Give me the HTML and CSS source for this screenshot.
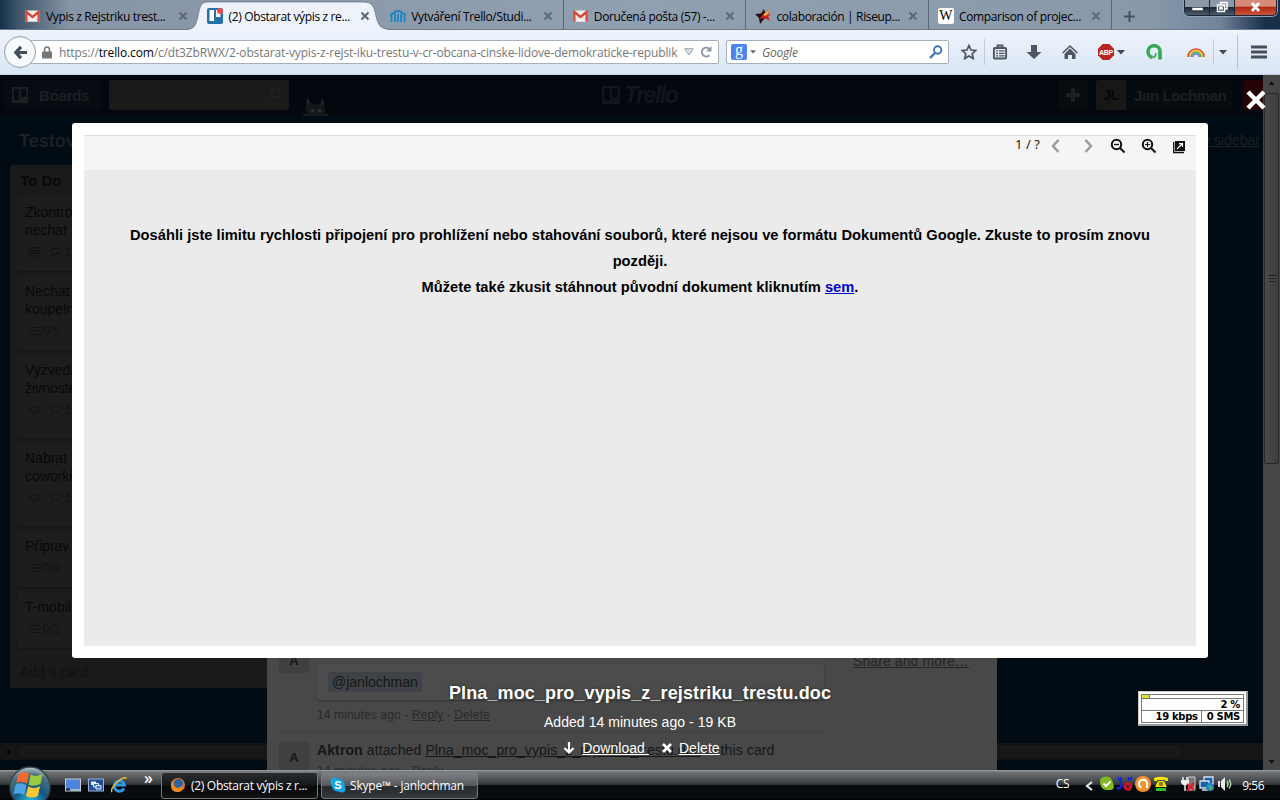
FILE: index.html
```html
<!DOCTYPE html>
<html lang="cs">
<head>
  <meta charset="UTF-8" />
  <title>(2) Obstarat výpis z rejstříku trestů | Trello</title>
  <link rel="stylesheet" href="styles.css">
</head>
<body>
  <svg width="0" height="0" class="defs">
    <symbol id="gmail" viewBox="0 0 16 12">
      <rect width="16" height="12" rx="1" fill="#f3efec"/>
      <path d="M2 11 6.500 6M14 11 9.500 6" stroke="#cfc8c4" fill="none"/>
      <path d="M1.400 12V1.500L8 7l6.600-5.500V12" fill="none" stroke="#d8463a" stroke-width="2.500"/>
    </symbol>
    <symbol id="x" viewBox="0 0 10 10"><path d="M1.500 1.500l7 7M8.500 1.500l-7 7" stroke="currentColor" stroke-width="2" fill="none"/></symbol>
    <symbol id="caret" viewBox="0 0 8 5"><path d="M0 0h8L4 4.500z" fill="currentColor"/></symbol>
    <symbol id="board" viewBox="0 0 16 16"><path fill-rule="evenodd" d="M0 0h16v16H0zM2 2v11h5V2zM9 2v8h5V2z" fill="currentColor"/></symbol>
    <symbol id="bubble" viewBox="0 0 12 10"><path d="M2.500 1.500h7l1.500 2-1.500 3H6L3 9V6.500L1 4.500z" fill="none" stroke="currentColor"/></symbol>
    <symbol id="eye" viewBox="0 0 12 8"><path d="M.5 4 4 1h4l3.500 3L8 7H4z" fill="none" stroke="currentColor"/></symbol>
    <symbol id="lines" viewBox="0 0 12 10"><path d="M0 .8h12M0 3.600h12M0 6.400h12M0 9.200h8" stroke="currentColor" stroke-width="1.200"/></symbol>
    <symbol id="checks" viewBox="0 0 13 10"><path d="M0 1.500h2m1 0h10M0 5h2m1 0h10M0 8.500h2m1 0h10" stroke="currentColor" stroke-width="1.200"/></symbol>
  </svg>

  <div class="tabbar">
    <div class="tabs">
      <div class="tab first"><svg class="fav" viewBox="0 0 16 16"><use href="#gmail" x="0" y="2" width="15" height="12"/></svg><span>Vypis z Rejstriku trest...</span><svg class="close"><use href="#x"/></svg></div>
      <div class="tab active">
        <svg class="shape" viewBox="0 0 208 30"><path d="M0 30C9 29 10 25 12 16 14 6 15 2 22 2H177c9 0 11 4 13 14 2 9 4 13 15 14z" fill="#eef3fb"/><path d="M0 29.500C9 29 10 25 12 16 14 6 15 2 22 2H177c9 0 11 4 13 14 2 9 4 13 15 13.500" fill="none" stroke="#5c6b7b" stroke-opacity=".65"/></svg>
        <svg class="fav" viewBox="0 0 16 16"><rect width="16" height="16" rx="2" fill="#2373a6"/><path d="M2.500 2h4.500v11H2.500zM9 2h4.500v7H9z" fill="#fff"/><circle cx="13" cy="3" r="3" fill="#f0504c"/></svg><span>(2) Obstarat výpis z re...</span><svg class="close"><use href="#x"/></svg>
      </div>
      <div class="tab"><svg class="fav" viewBox="0 0 16 16"><path d="M1.500 14V8M5 14V6M8 14V6M11 14V6M14.500 14V8" stroke="#1687c4" stroke-width="1.800"/><path d="M.5 8Q1 5 4 5.500 5 3 8 3t4 2.500q3-.5 3.500 2.500" fill="none" stroke="#1687c4" stroke-width="2"/></svg><span>Vytváření Trello/Studi...</span><svg class="close"><use href="#x"/></svg></div>
      <div class="tab"><svg class="fav" viewBox="0 0 16 16"><use href="#gmail" x="0" y="2" width="15" height="12"/></svg><span>Doručená pošta (57) -...</span><svg class="close"><use href="#x"/></svg></div>
      <div class="tab"><svg class="fav" viewBox="0 0 16 16"><path d="M0 6l6-.5L9 1l1.500 5 3 4-4 .5L5 16l-1-6z" fill="#241010"/><path d="M8 6l7-5-2 5 3 1-3 1 2 5-5-3-5 1z" fill="#d42020"/><path d="M9 6l6-5-3 6-3 1z" fill="#f5c04a"/></svg><span>colaboración | Riseup...</span><svg class="close"><use href="#x"/></svg></div>
      <div class="tab"><div class="fav wiki">W</div><span>Comparison of projec...</span><svg class="close"><use href="#x"/></svg></div>
      <svg class="newtab" viewBox="0 0 11 11"><path d="M5.500 0v11M0 5.500h11" stroke="#46525e" stroke-width="2"/></svg>
    </div>
    <div class="winbtns">
      <div><svg viewBox="0 0 24 14"><rect x="7" y="7.500" width="11" height="3" fill="#fff" stroke="#444" stroke-width=".6"/></svg></div>
      <div><svg viewBox="0 0 24 14"><path d="M10.500 4.500V2.500h6.500v6.500H15M7.500 5h7v6.500h-7zM10 7.500h2v1.500h-2z" fill="none" stroke="#fff" stroke-width="1.500"/></svg></div>
      <div class="wclose"><svg viewBox="0 0 40 14"><path d="M16.500 3l7 8M23.500 3l-7 8" stroke="#fff" stroke-width="2.800"/></svg></div>
    </div>
  </div>

  <div class="navbar">
    <div class="back"><svg viewBox="0 0 16 16"><path d="M8.500 2 3 8l5.500 6M3 8h12" fill="none" stroke="#424f5a" stroke-width="3.400"/></svg></div>
    <div class="urlbar">
      <svg class="lock" viewBox="0 0 10 13"><path d="M2.500 6V4Q2.500 1 5 1t2.500 3v2" fill="none" stroke="#777" stroke-width="1.600"/><rect y="5.500" width="10" height="7" rx="1" fill="#777"/></svg>
      <span class="url">https://<b>trello.com</b>/c/dt3ZbRWX/2-obstarat-vypis-z-rejst-iku-trestu-v-cr-obcana-cinske-lidove-demokraticke-republik</span>
      <svg class="drop" viewBox="0 0 10 8"><path d="M.7.700h8.600L5 7z" fill="#dde2e8" stroke="#9aa4ae"/></svg>
      <svg class="reload" viewBox="0 0 12 12"><path d="M9.300 9.200A4.400 4.400 0 1 1 9 2.700" fill="none" stroke="#8d97a1" stroke-width="2"/><path d="M11.500 0v5.500H6z" fill="#8d97a1"/></svg>
    </div>
    <div class="search">
      <div class="g">g</div><svg class="caret"><use href="#caret"/></svg><em>Google</em>
      <svg class="glass" viewBox="0 0 14 14"><circle cx="8.700" cy="5" r="3.700" fill="none" stroke="#4274b5" stroke-width="1.900"/><path d="M6 8 1 13" stroke="#4274b5" stroke-width="2.400"/></svg>
    </div>
    <div class="tool star"><svg viewBox="0 0 16 16"><path d="M8 1.500l2 4.500 4.800.500-3.600 3.200 1 4.800L8 12l-4.200 2.500 1-4.800L1.200 6.500 6 6z" fill="none" stroke="#4c5661" stroke-width="1.700"/></svg></div>
    <div class="tool list"><svg viewBox="0 0 16 16"><path d="M5.500 3.500V1.500h5v2" fill="none" stroke="#4c5661" stroke-width="1.800"/><rect x="1.900" y="4" width="12.200" height="10.500" rx="1" fill="none" stroke="#4c5661" stroke-width="1.900"/><path d="M4 6.800h2m1 0h5.500M4 9.300h2m1 0h5.500M4 11.800h2m1 0h5.500" stroke="#4c5661" stroke-width="1.200"/></svg></div>
    <div class="tool"><svg viewBox="0 0 16 16"><path d="M5 1h6v7h4.500L8 15 .5 8H5z" fill="#4c5661"/></svg></div>
    <div class="tool"><svg viewBox="0 0 16 16"><path d="M8 4.500 13.500 10v5H10v-4H6v4H2.500v-5z" fill="#4c5661"/><path d="M.7 9 8 2l7.300 7" fill="none" stroke="#4c5661" stroke-width="1.600"/></svg></div>
    <div class="tool abp"><svg viewBox="0 0 16 16"><path d="M4.700 0h6.600L16 4.700v6.600L11.300 16H4.700L0 11.300V4.700z" fill="#b8261f"/><text x="8" y="11" class="abptext">ABP</text></svg><svg class="caret"><use href="#caret"/></svg></div>
    <div class="tool"><svg viewBox="0 0 16 16"><path d="M6.500 13.500A6 6 0 1 1 14 8.500V15.500" fill="none" stroke="#36a853" stroke-width="3.600"/><path d="M6.500 13.500Q10 13 10 9" fill="none" stroke="#36a853" stroke-width="1.500"/></svg></div>
    <div class="tool rainbow"><svg class="arc" viewBox="0 0 18 10" fill="none" stroke-width="1.700"><path d="M1 10a8 8 0 0 1 16 0" stroke="#e8442e"/><path d="M2.600 10a6.400 6.400 0 0 1 12.800 0" stroke="#f6c83a"/><path d="M4.200 10a4.800 4.800 0 0 1 9.600 0" stroke="#58b55a"/><path d="M5.800 10a3.200 3.200 0 0 1 6.400 0" stroke="#7a86e0"/></svg></div>
    <div class="tool drop2"><svg class="caret"><use href="#caret"/></svg></div>
    <div class="tool menu"><svg viewBox="0 0 16 14"><path d="M0 2h16M0 7h16M0 12h16" stroke="#46505b" stroke-width="2.800"/></svg></div>
  </div>

  <div class="page">
    <div class="board">
      <div class="header">
        <div class="boards"><svg><use href="#board"/></svg>Boards</div>
        <div class="hsearch"><svg viewBox="0 0 16 16"><circle cx="10" cy="6" r="4.500"/><path d="M7 9l-6 6"/></svg></div>
        <svg class="husky" viewBox="0 0 24 20"><path d="M3 18V2l4 5 4 2h5l3-6 2 10 1 5z" fill="#14181b"/><path d="M4 9V3l3 4zM17 7l2-4 1 6z" fill="#25282a"/><path d="M7 17q1-5 4-3 1 3-4 3M14 14q4-2 4 3-4 0-4-3" fill="#2c2e30"/><path d="M0 19h24" stroke="#1d2023" stroke-width="1.500"/></svg>
        <div class="logo"><svg><use href="#board"/></svg><i>Trello</i></div>
        <div class="plus"><svg viewBox="0 0 14 14"><path d="M7 0v14M0 7h14" stroke="#1c2023" stroke-width="4"/></svg></div>
        <div class="user"><b>JL</b><span>Jan Lochman</span></div>
        <div class="notify"></div>
      </div>
      <div class="boardbar"><h1>Testovací</h1><a>Show sidebar</a></div>
      <div class="column">
        <h2>To Do</h2>
        <div class="card">Zkontro<br>nechat<p><svg><use href="#lines"/></svg><svg class="second"><use href="#bubble"/></svg>1</p></div>
        <div class="card">Nechat<br>koupeln<p><svg><use href="#checks"/></svg>0/5</p></div>
        <div class="card tall">Vyzvedn<br>živnoste<p><svg class="eye"><use href="#eye"/></svg><svg class="second"><use href="#bubble"/></svg>1</p></div>
        <div class="card tall">Nabrat<br>coworki<p><svg class="eye"><use href="#eye"/></svg><svg class="second"><use href="#bubble"/></svg>1</p></div>
        <div class="card short">Připrav<p><svg><use href="#checks"/></svg>0/9</p></div>
        <div class="card short">T-mobil<p><svg><use href="#checks"/></svg>0/2</p></div>
        <div class="add">Add a card</div>
      </div>
      <div class="hscroll"><svg viewBox="0 0 4 6"><path d="M4 0v6L0 3z"/></svg><div></div></div>

      <div class="window">
        <div class="feed">
          <div class="row">
            <div class="avatar">A</div>
            <div class="body">
              <div class="comment"><span>@janlochman</span></div>
              <div class="meta">14 minutes ago - <u>Reply</u> - <u>Delete</u></div>
            </div>
          </div>
          <div class="row second">
            <div class="avatar">A</div>
            <div class="body">
              <div class="action"><b>Aktron</b> attached <u>Plna_moc_pro_vypis_z_rejstriku_trestu.doc</u> to this card</div>
              <div class="meta">14 minutes ago - <u>Reply</u></div>
            </div>
          </div>
        </div>
        <u class="share">Share and more…</u>
      </div>
    </div>
    <div class="vscroll">
      <svg viewBox="0 0 6 4"><path d="M0 4h6L3 0z"/></svg>
      <div class="thumb"><i></i></div>
      <svg class="down" viewBox="0 0 6 4"><path d="M0 0h6L3 4z"/></svg>
    </div>

    <div class="viewer">
      <div class="vbar">
        <span>1 / ?</span>
        <svg class="prev" viewBox="0 0 16 16"><path d="M10.500 2 5 8l5.500 6" stroke="#999" stroke-width="2.400" fill="none"/></svg>
        <svg class="next" viewBox="0 0 16 16"><path d="M5.500 2 11 8l-5.500 6" stroke="#999" stroke-width="2.400" fill="none"/></svg>
        <svg class="zoomout" viewBox="0 0 16 16"><circle cx="6.500" cy="6.500" r="4.700"/><path d="M10 10l4.500 4.500"/><path d="M4 6.500h5" stroke-width="1.400"/></svg>
        <svg class="zoomin" viewBox="0 0 16 16"><circle cx="6.500" cy="6.500" r="4.700"/><path d="M10 10l4.500 4.500"/><path d="M4 6.500h5M6.500 4v5" stroke-width="1.200"/></svg>
        <svg class="popout" viewBox="0 0 14 14"><path d="M1.700 2v10.500H12" fill="none" stroke="#111" stroke-width="1.300"/><rect x="3" y="1" width="10" height="10" fill="#111"/><path d="M5 9l5-5M7 3.600h3.500v3.500" stroke="#fff" stroke-width="1.200" fill="none"/></svg>
      </div>
      <div class="vbody">
        <p>Dosáhli jste limitu rychlosti připojení pro prohlížení nebo stahování souborů, které nejsou ve formátu Dokumentů Google. Zkuste to prosím znovu<br>později.</p>
        <p>Můžete také zkusit stáhnout původní dokument kliknutím <a href="#">sem</a>.</p>
      </div>
    </div>
    <svg class="bigx" viewBox="0 0 20 20"><path d="M2 2l16 16M18 2 2 18" stroke="#fff" stroke-width="4.500"/></svg>
    <div class="caption">
      <h3>Plna_moc_pro_vypis_z_rejstriku_trestu.doc</h3>
      <div>Added 14 minutes ago - 19 KB</div>
      <div class="links">
        <svg viewBox="0 0 12 12"><path d="M6 0v10M1.500 6 6 10.500 10.500 6" stroke="#fff" stroke-width="2.200" fill="none"/></svg><u>Download&nbsp;</u>
        <svg class="del" viewBox="0 0 10 10"><path d="M1 1l8 8M9 1 1 9" stroke="#fff" stroke-width="2.600"/></svg><u>Delete</u>
      </div>
    </div>
    <div class="netmeter">
      <div class="bar"><i></i></div>
      <div class="pct">2 %</div>
      <div class="rate"><span>19 kbps</span><span>0 SMS</span></div>
    </div>
  </div>

  <div class="taskbar">
    <svg class="orb" viewBox="0 0 42 42">
      <defs><radialGradient id="o" cx=".5" cy=".9" r=".9"><stop offset="0" stop-color="#29c4f2"/><stop offset=".45" stop-color="#13587f"/><stop offset=".8" stop-color="#4d7080"/><stop offset="1" stop-color="#bccbd0"/></radialGradient></defs>
      <circle cx="21" cy="21" r="20" fill="url(#o)" stroke="#35464e" stroke-width="1.500"/>
      <g transform="translate(-1.500 -3.500) scale(1.080)">
        <path d="M10 11q5-4 10-.5L18 19.500q-5-3-10-.5z" fill="#ef6a32"/><path d="M21.500 11q5 3 11-.5L30.500 20q-6 3-11 .5z" fill="#9acb3c"/>
        <path d="M7.500 20.500q5-3 10 .5l-2 9q-5-3-10-.5z" fill="#4fa5e4"/><path d="M19.200 22q5 3 11 0L28 31q-5 3-11 0z" fill="#fdc634"/>
      </g>
    </svg>
    <div class="quick">
      <svg viewBox="0 0 16 16"><rect x=".5" y="2" width="15" height="12" fill="#4b86dc" stroke="#c3cbd8"/><path d="M1 12h14v1.500H1z" fill="#a9bad2"/><path d="M1 11.500h4v2H1z" fill="#222"/></svg>
      <svg viewBox="0 0 16 16"><rect x=".5" y="2" width="15" height="12" fill="#1f4f9c" stroke="#9eb3d2"/><path d="M3 4.500h5v3.500H3z" fill="#e8eef8"/><path d="M5.500 6.500h5v3.500h-5z" fill="#3d74c2" stroke="#e8eef8"/><path d="M8 8.500h5v3.500H8z" fill="#3d74c2" stroke="#e8eef8"/></svg>
      <svg viewBox="0 0 16 16"><path d="M13 11.500A5.200 5.200 0 1 1 13.500 8H4.500" fill="none" stroke="#2b9bea" stroke-width="2.800"/><path d="M1 15Q-1 12 6 5.500 13-1 15.500 1.500" fill="none" stroke="#f0bd37" stroke-width="1.500"/></svg>
    </div>
    <span class="more">»</span>
    <div class="task current"><svg viewBox="0 0 16 16"><circle cx="8" cy="8" r="7" fill="#e8731f"/><circle cx="8.500" cy="6.500" r="4.500" fill="#2761a8"/><path d="M2 3q0 8 5 8 4 0 5-3 1 7-5 7Q1 15 1 8z" fill="#f08b24"/></svg><span>(2) Obstarat výpis z r...</span></div>
    <div class="task"><svg viewBox="0 0 16 16"><circle cx="8" cy="8" r="6.500" fill="#12a5e8"/><circle cx="4.500" cy="4.500" r="4" fill="#12a5e8"/><circle cx="11.500" cy="11.500" r="4" fill="#12a5e8"/><text x="8" y="12" class="skype">S</text></svg><span>Skype™ - janlochman</span></div>
    <div class="tray">
      <span class="lang">CS</span>
      <svg class="chev" viewBox="0 0 8 10"><path d="M7 1 2 5l5 4" stroke="#dde4ea" stroke-width="2.200" fill="none"/></svg>
      <svg viewBox="0 0 16 16"><path d="M5 1q7-2 9 6 3 8-5 7Q2 15 1 6 1 1 5 1z" fill="#7fba23"/><path d="M4.500 7.500 7 10l4.500-4.500" stroke="#fff" stroke-width="2" fill="none"/></svg>
      <svg viewBox="0 0 16 16"><path d="M1 1l1 3 2 1V1M4 5v5l-3 4M4 9l4 3M11 1l1 3 3-3M0 12h4" stroke="#1526d8" stroke-width="1.800" fill="none"/><circle cx="11" cy="10.500" r="4.300" fill="#d81818"/><path d="M9 8.500l4 4m0-4-4 4" stroke="#201080"/></svg>
      <svg viewBox="0 0 16 16"><circle cx="8" cy="8" r="8" fill="#f5922b"/><path d="M6.500 11.500A4 4 0 1 1 12 8v4" fill="none" stroke="#fff" stroke-width="2"/></svg>
      <svg viewBox="0 0 16 16"><path d="M1 2q7-2.500 14 0v3h-3V4H4v1H1z" fill="#f2e300"/><path d="M5 5h6l3 6H2z" fill="#f2e300"/><path d="M3 12h10v3H3z" fill="#19c41c"/><path d="M6 7h4M6 9h4" stroke="#222"/></svg>
      <svg class="gap" viewBox="0 0 16 16"><path d="M7 1h7v13H8z" fill="#777" stroke="#ccc"/><path d="M2 1v4M6 1v4M4 9v6" stroke="#eee" stroke-width="1.500"/><path d="M0 4h8v3q-4 5-8 0z" fill="#eee"/><path d="M6 8l7 6m0-7-7 8" stroke="#e81b22" stroke-width="2.200"/></svg>
      <svg viewBox="0 0 16 16"><path d="M5 1h9v7H5z" fill="#1e5da8" stroke="#d4e2f0" stroke-width="1.300"/><path d="M1 5h9v7H1zM3 14h6" fill="#1e5da8" stroke="#d4e2f0" stroke-width="1.300"/><circle cx="11" cy="11" r="4" fill="#1b82cf"/><path d="M9 9l3 1 2 3-3 1z" fill="#4fb848"/></svg>
      <svg viewBox="0 0 16 16"><path d="M1 5h2v6H1zM4 5l4-4v14l-4-4z" fill="#e8eaec"/><path d="M10 5q2 3 0 6M12 3.500q3.500 4.500 0 9" fill="none" stroke="#b4d8b0" stroke-width="1.400"/></svg>
      <span class="clock">9:56</span>
    </div>
  </div>
</body>
</html>
```
FILE: styles.css
```css
* { box-sizing: border-box; }
html, body {
  margin: 0; padding: 0;
  width: 1280px; height: 800px;
  overflow: hidden;
}
body {
  display: flex; flex-direction: column;
  font-family: 'Liberation Sans', sans-serif;
  font-size: 14px;
  background: #000;
}
svg { display: block; flex: none; }
.defs { position: absolute; }

/* browser tabs */
.tabbar {
  position: relative;
  height: 30px;
  background: linear-gradient(90deg, #14304a 0, #3f566b 18px, #8795a6 70px, #91a0b1 50%, #8999aa 1150px, #70849a 1220px, #18304a 1265px);
  border-bottom: 1px solid #6b7b8b;
}
.tabs {
  display: grid;
  grid-template-columns: repeat(6, 182.6px) 30px;
  margin-left: 16px;
  height: 30px;
}
.tab {
  display: flex; align-items: center;
  position: relative;
  padding: 2px 10px 0 9px;
  border-right: 1px solid #56677a;
  font: 12px 'Open Sans', sans-serif;
  color: #000;
}
.tab span { position: relative; margin-left: 5px; white-space: nowrap; letter-spacing: -0.35px; }
.tab.first { border: 0; padding-right: 11px; }
.tab.active { border: 0; z-index: 1; padding-left: 8px; padding-right: 11px; }
.tab.active span { margin-left: 6px; }
.shape { position: absolute; left: -13px; top: 0; width: 208px; height: 30px; }
.fav { position: relative; width: 16px; height: 16px; }
.wiki { background: #fff; border-radius: 2px; font: 14px/16px 'Liberation Serif', serif; text-align: center; }
.close { position: relative; width: 10px; height: 10px; margin-left: auto; color: #5d6873; }
.newtab { width: 11px; height: 11px; margin: 11px 0 0 12px; }
.winbtns {
  position: absolute; right: 3px; top: 0;
  display: flex;
  height: 16px;
  border: 1px solid #1b2632; border-top: 0;
  border-radius: 0 0 5px 5px;
  overflow: hidden;
  box-shadow: 0 0 0 1px #8fa1b2;
}
.winbtns div { width: 25px; background: linear-gradient(#8b98a8 45%, #1c2838 50%, #4c5d70); border-right: 1px solid #1b2632; }
.winbtns .wclose { width: 41px; background: linear-gradient(#d68a78 40%, #b32a15 50%, #c8533c); border: 0; }
.winbtns svg { height: 14px; margin: auto; width: 100%; }

/* navigation bar */
.navbar {
  display: flex; align-items: center;
  height: 45px;
  padding-left: 4px;
  background: linear-gradient(#eef3fb, #d9e6f5);
  border-bottom: 1px solid #c4d2e0;
}
.back {
  display: flex; align-items: center; justify-content: center;
  width: 32px; height: 32px;
  border: 1px solid #929ca8;
  border-radius: 50%;
  background: #f7fafd;
  z-index: 1;
}
.back svg { width: 15px; height: 15px; }
.urlbar, .search {
  display: flex; align-items: center;
  height: 24px;
  background: #fff;
  border: 1px solid #a5b0bd;
  border-radius: 2px;
}
.urlbar { width: 689px; margin-left: -6px; padding-left: 11px; }
.lock { width: 10px; height: 13px; }
.url {
  width: 619px;
  margin-left: 7px;
  overflow: hidden;
  white-space: nowrap;
  font: 12px 'Open Sans', sans-serif;
  color: #777;
  letter-spacing: -0.15px;
}
.url b { font-weight: normal; color: #000; }
.drop { width: 10px; height: 8px; margin-left: 6px; }
.reload { width: 12px; height: 12px; margin-left: 6px; }
.search { width: 223px; margin-left: 7px; padding: 0 5px 0 4px; }
.g {
  width: 16px; height: 16px;
  background: #4a84ee;
  border-radius: 2px;
  color: #fff;
  font: 16px/11px 'Liberation Serif', serif;
  text-align: center;
}
.caret { width: 8px; height: 5px; color: #3c4651; }
.search .caret { margin-left: 3px; width: 6px; height: 4px; color: #666; }
.search em { margin-left: 6px; font: italic 12px 'Open Sans', sans-serif; color: #666; letter-spacing: -0.2px; }
.glass { width: 14px; height: 14px; margin-left: auto; }
.tool { display: flex; align-items: center; justify-content: center; width: 36px; height: 26px; flex: none; }
.tool svg:not(.caret) { width: 16px; height: 16px; }
.star { width: 31px; margin-left: 5px; border-right: 1px solid #c0cbd8; }
.list { width: 29px; margin-right: 2px; }
.abp { width: 48px; gap: 3px; padding-right: 2px; }
.abptext { font: bold 7px 'Liberation Sans', sans-serif; fill: #fff; text-anchor: middle; letter-spacing: -0.3px; }
.rainbow { margin-left: 6px; border-right: 1px solid #c0cbd8; }
.tool .arc:not(.caret) { width: 18px; height: 10px; }
.drop2 { width: 18px; }
.menu { width: 43px; margin-left: 5px; height: 34px; border-left: 1px solid #b5c1cf; }

/* dimmed Trello board */
.page { position: relative; display: flex; height: 695px; background: #010b13; }
.board { position: relative; width: 1263px; height: 695px; overflow: hidden; display: flex; flex-direction: column; }
.header { display: flex; height: 40px; padding: 5px 0 0 5px; background: #02080e; color: #1b1f22; }
.header > * { flex: none; }
.header > div { height: 30px; border-radius: 3px; display: flex; align-items: center; }
.boards { width: 96px; padding-left: 7px; background: #060c11; font-weight: bold; font-size: 15px; letter-spacing: -0.2px; }
.boards svg, .logo svg { width: 16px; height: 16px; margin-right: 11px; }
.hsearch { width: 180px; margin-left: 8px; background: #1a1a1a; }
.hsearch svg { width: 17px; height: 16px; margin-left: 156px; fill: none; stroke: #202020; stroke-width: 2; }
.husky { width: 25px; height: 21px; margin: 15px 0 0 14px; }
.logo { width: 90px; margin-left: 274px; color: #11161a; }
.logo svg { width: 18px; height: 18px; margin-right: 4px; }
.logo i { font-size: 23px; font-weight: bold; letter-spacing: -1.5px; }
.plus { width: 30px; margin-left: 366px; justify-content: center; background: #070c10; }
.plus svg { width: 14px; height: 14px; }
.user { width: 137px; margin-left: 8px; background: #060b0f; font-weight: bold; font-size: 15px; letter-spacing: -0.4px; white-space: nowrap; }
.user b { width: 30px; line-height: 30px; text-align: center; background: #171717; color: #070707; font-size: 14px; border-radius: 3px 0 0 3px; }
.user span { margin-left: 8px; }
.notify { width: 21px; margin-left: 10px; background: #250204; }
.boardbar { display: flex; justify-content: space-between; padding: 15px 3px 0 19px; height: 50px; color: #1a2024; }
.boardbar h1 { margin: 0; font-size: 18px; line-height: 22px; }
.boardbar a { text-decoration: underline; line-height: 21px; }
.column { width: 270px; height: 523px; margin-left: 10px; padding: 7px; background: #1a1a1a; border-radius: 3px; color: #080808; }
.column h2 { margin: 0 0 7px 3px; font-size: 15px; line-height: 18px; color: #080808; }
.card { height: 74px; margin-bottom: 5px; padding: 6px 8px; line-height: 18px; background: #1d1d1d; border-radius: 3px; box-shadow: 0 1px 1px #151515; }
.card.tall { height: 83px; }
.card.short { height: 56px; }
.card p { display: flex; align-items: center; height: 26px; margin: 0 0 0 3px; font-size: 12px; color: #111; }
.card p svg { width: 13px; height: 10px; margin-right: 2px; }
.card p svg.eye { height: 8px; }
.card p svg.second { margin: 0 3px 0 6px; }
.add { margin: 15px 3px; line-height: 18px; color: #101010; }
.hscroll { display: flex; align-items: center; height: 17px; margin-top: 55px; padding: 1px 81px 1px 6px; background: #151515; }
.hscroll svg { width: 4px; height: 6px; fill: #000; }
.hscroll div { flex: 1; height: 15px; margin-left: 8px; border: 1px solid #101010; border-radius: 2px; background: #181818; }

/* card window behind the viewer */
.window {
  position: absolute; left: 267px; top: 560px;
  display: flex; align-items: flex-start;
  width: 730px; height: 135px;
  padding: 8px 12px 0;
  background: #484848;
  color: #161616;
}
.feed { width: 545px; }
.row { display: flex; gap: 8px; height: 89px; }
.row.second { padding-top: 9px; border-top: 1px solid #404040; }
.avatar { width: 30px; height: 30px; line-height: 32px; background: #404040; border-radius: 3px; text-align: center; font-weight: bold; font-size: 13px; }
.row:first-child .avatar { line-height: 36px; }
.body { flex: 1; }
.row:first-child .comment { margin-top: 21px; }
.comment { height: 36px; padding: 8px 11px; background: #4c4c4c; border-radius: 3px; box-shadow: 0 1px 2px #353535; }
.comment span { display: inline-block; padding: 0 4px; line-height: 20px; background: #3f4347; border-radius: 3px; }
.meta { margin-top: 6px; font-size: 12px; line-height: 18px; color: #292929; letter-spacing: 0.13px; }
.action { line-height: 16px; white-space: nowrap; letter-spacing: 0.11px; }
.second .meta { margin-top: 5px; line-height: 16px; }
.share { margin: 9px 0 0 29px; line-height: 18px; color: #252525; letter-spacing: 0.1px; }

.vscroll { display: flex; flex-direction: column; align-items: center; width: 17px; padding: 6px 0; background: #464646; }
.vscroll svg { width: 7px; height: 4px; fill: #111; }
.thumb { display: flex; align-items: center; justify-content: center; width: 15px; height: 371px; margin-top: 8px; border: 1px solid #282828; border-radius: 2px; background: linear-gradient(90deg, #4b4b4b, #3c3c3c); }
.thumb i { width: 6px; height: 8px; background: repeating-linear-gradient(#1c1c1c 0 1px, #484848 1px 3px); }
.vscroll .down { margin-top: auto; }

/* attachment viewer */
.viewer {
  position: absolute; left: 72px; top: 48px;
  width: 1136px; height: 535px;
  padding: 12px;
  background: #fff;
  border-radius: 3px;
}
.vbar { display: flex; height: 36px; padding-right: 10px; justify-content: flex-end; background: #f5f5f5; border-top: 1px solid #ddd; border-bottom: 1px solid #e8e8e8; }
.vbar span { margin-right: 8px; font: 13px/17px 'Open Sans', sans-serif; color: #111; letter-spacing: 0.1px; }
.vbar svg { width: 16px; height: 16px; margin-top: 2px; }
.vbar .prev { margin-right: 16px; }
.vbar .next { margin-right: 14px; }
.zoomout, .zoomin { fill: none; stroke: #111; stroke-width: 2; }
.vbar .zoomout, .vbar .zoomin { margin-right: 15px; }
.vbar .popout { width: 14px; height: 14px; margin-top: 4px; }
.vbody { height: 475px; padding-top: 51px; background: #ebebeb; text-align: center; font-weight: bold; font-size: 14.67px; line-height: 26px; letter-spacing: 0.02px; color: #000; }
.vbody p { margin: 0; white-space: nowrap; }
.vbody a { color: #00c; }
.bigx { position: absolute; left: 1246px; top: 15px; width: 20px; height: 20px; }
.caption { position: absolute; left: 0; top: 607px; width: 1280px; text-align: center; color: #fff; line-height: 22px; }
.caption h3 { margin: 0 0 7px; font-size: 18px; line-height: 22px; letter-spacing: 0.12px; text-shadow: 0 0 3px #222; }
.caption > div { letter-spacing: 0.05px; }
.links { display: flex; align-items: center; justify-content: center; margin-top: 4px; padding-left: 3px; }
.links svg { width: 12px; height: 12px; margin-right: 7px; }
.links .del { width: 10px; height: 10px; margin: 0 7px 0 13px; }

.netmeter { position: absolute; left: 1138px; top: 616px; width: 110px; height: 35px; padding: 2px; background: #fff; border: 1px solid #ccc; border-right: 2px solid #999; border-bottom: 2px solid #999; font: bold 10px/12px 'DejaVu Sans', sans-serif; letter-spacing: -0.3px; color: #000; }
.netmeter > div { width: 103px; border: 1px solid #777; border-bottom: 0; text-align: right; }
.netmeter .bar { height: 4px; }
.bar i { display: block; width: 8px; height: 3px; background: #dfdf35; border-right: 1px solid #777; }
.netmeter .pct { height: 12px; line-height: 11px; padding-right: 3px; }
.netmeter .rate { display: flex; justify-content: flex-end; height: 13px; line-height: 11px; border-bottom: 1px solid #777; }
.rate span { padding: 0 3px; }
.rate span + span { border-left: 1px solid #777; padding-left: 5px; }

/* taskbar */
.taskbar {
  position: relative;
  display: flex; align-items: center;
  height: 30px;
  padding-left: 65px;
  background: linear-gradient(#a0a4a6 0, #6f7274 2px, #55585a 8px, #303335 15px, #05090c 15px, #0a0e11 27px, #000 30px);
  color: #fff;
  font: 12px 'Open Sans', sans-serif;
}
.orb { position: absolute; left: 9px; top: -4px; width: 42px; height: 42px; }
.quick { display: flex; gap: 7px; }
.quick svg, .task svg, .tray svg { width: 16px; height: 16px; }
.more { width: 20px; margin: -13px 0 0 17px; font-size: 16px; font-weight: 600; line-height: 15px; }
.task {
  display: flex; align-items: center;
  width: 157px; height: 27px;
  margin: 0 3px 0 0;
  padding-left: 8px;
  border: 1px solid #75797c;
  border-radius: 3px;
  background: linear-gradient(#7f8284, #55595c 50%, #26292c 50%, #35393c);
}
.task.current { margin-left: -3px; background: linear-gradient(#2a2d2f, #141618 50%, #050607 50%, #101214); }
.task span { margin-left: 5px; white-space: nowrap; letter-spacing: -0.3px; }
.task + .task span { margin-left: 4px; letter-spacing: -0.2px; }
.skype { font: bold 11px 'Liberation Sans', sans-serif; fill: #fff; text-anchor: middle; }
.tray { display: flex; align-items: center; gap: 2px; margin-left: auto; padding: 0 16px 3px 0; }
.lang { margin-right: 14px; letter-spacing: -0.3px; }
.tray .chev { width: 8px; height: 10px; margin: 4px 4px 0 0; }
.tray .gap { margin-left: 10px; }
.clock { margin: 3px 0 0 7px; letter-spacing: -0.5px; }
```
